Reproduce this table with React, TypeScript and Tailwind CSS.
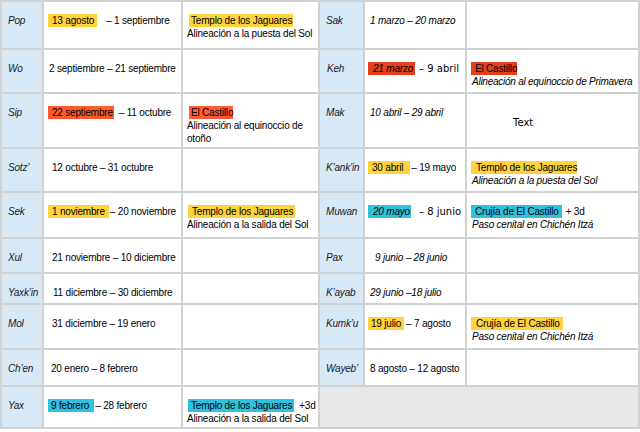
import type { ReactNode } from 'react';

const Mark = ({ className = '', children }: { className?: string; children: ReactNode }) => (
  <span className={`inline-block h-[13px] leading-[13px] align-top ${className}`}>{children}</span>
);

const Name = ({ children, className = '' }: { children: ReactNode; className?: string }) => (
  <div className={`bg-[#d8e8f5] pt-[12px] italic text-[#141a2e] ${className || 'pl-[6px]'}`}>{children}</div>
);

const Cell = ({ children, className = '' }: { children?: ReactNode; className?: string }) => (
  <div className={`bg-white pt-[12px] ${className}`}>{children}</div>
);

const yellow = 'bg-[#fed33c]';
const cyan = 'bg-[#30c1de]';

export default function App() {
  return (
    <div className="w-[640px] h-[432px] bg-white font-['Liberation_Sans',Arial,sans-serif] text-[10px] leading-[13px] tracking-[-0.2px] text-black">
      <div className="grid grid-cols-[40px_137px_135px_43px_100px_171px] grid-rows-[46px_42px_53px_42px_44px_33px_29px_43px_35px_40px] gap-[2px] p-[2px] bg-[#d2d2d2]">
        {/* Pop / Sak */}
        <Name>Pop</Name>
        <Cell className="pl-[4px] whitespace-nowrap">
          <Mark className={`${yellow} pl-[4px] pr-[3px]`}>13 agosto</Mark>
          <span className="ml-[9px]">– 1 septiembre</span>
        </Cell>
        <Cell className="pl-[4px] whitespace-nowrap">
          <div><Mark className={`${yellow} ml-[2px] pl-[2px] pr-[1px]`}>Templo de los Jaguares</Mark></div>
          <div>Alineación a la puesta del Sol</div>
        </Cell>
        <Name>Sak</Name>
        <Cell className="pl-[5px] italic whitespace-nowrap">1 marzo – 20 marzo</Cell>
        <Cell />

        {/* Wo / Keh */}
        <Name>Wo</Name>
        <Cell className="pl-[5px] whitespace-nowrap">2 septiembre – 21 septiembre</Cell>
        <Cell />
        <Name className="pl-[7px]">Keh</Name>
        <Cell className="pl-[3px] whitespace-nowrap">
          <Mark className="bg-[#e4401c] pl-[5px] pr-[2px] italic">21 marzo</Mark>
          <span className="ml-[4px] font-['DejaVu_Sans',sans-serif] tracking-normal">– 9 abril</span>
        </Cell>
        <Cell className="pl-[4px] whitespace-nowrap">
          <div><Mark className="bg-[#e4401c] pl-[4px]">El Castillo</Mark></div>
          <div className="ml-[1px] italic tracking-[-0.25px]">Alineación al equinoccio de Primavera</div>
        </Cell>

        {/* Sip / Mak */}
        <Name>Sip</Name>
        <Cell className="pl-[4px] whitespace-nowrap">
          <Mark className="bg-[#ff5b2f] pl-[4px] pr-[1px]">22 septiembre</Mark>
          <span className="ml-[5px]">– 11 octubre</span>
        </Cell>
        <Cell className="pl-[4px] pr-[6px]">
          <div><Mark className="bg-[#ff5c38] ml-[2px] pl-[2px]">El Castillo</Mark></div>
          <div>Alineación al equinoccio de otoño</div>
        </Cell>
        <Name>Mak</Name>
        <Cell className="pl-[5px] italic whitespace-nowrap">10 abril – 29 abril</Cell>
        <Cell className="pt-[22px] pl-[46px] font-['DejaVu_Sans',sans-serif] tracking-normal">Text</Cell>

        {/* Sotz' / K'ank'in */}
        <Name>Sotz’</Name>
        <Cell className="pl-[8px] whitespace-nowrap">12 octubre – 31 octubre</Cell>
        <Cell />
        <Name>K’ank’in</Name>
        <Cell className="pl-[3px] whitespace-nowrap">
          <Mark className={`${yellow} pl-[4px] pr-[7px]`}>30 abril</Mark>
          <span className="ml-[1px]">– 19 mayo</span>
        </Cell>
        <Cell className="pl-[4px] whitespace-nowrap">
          <div><Mark className={`${yellow} pl-[5px]`}>Templo de los Jaguares</Mark></div>
          <div className="ml-[1px] italic">Alineación a la puesta del Sol</div>
        </Cell>

        {/* Sek / Muwan */}
        <Name>Sek</Name>
        <Cell className="pl-[4px] whitespace-nowrap">
          <Mark className={`${yellow} pl-[4px] pr-[4px]`}>1 noviembre</Mark>
          <span className="ml-[1px]">– 20 noviembre</span>
        </Cell>
        <Cell className="pl-[4px] whitespace-nowrap">
          <div><Mark className={`${yellow} ml-[1px] pl-[4px] pr-[2px]`}>Templo de los Jaguares</Mark></div>
          <div>Alineación a la salida del Sol</div>
        </Cell>
        <Name>Muwan</Name>
        <Cell className="pl-[3px] whitespace-nowrap">
          <Mark className={`${cyan} pl-[5px] pr-[1px] italic`}>20 mayo</Mark>
          <span className="ml-[8px] font-['DejaVu_Sans',sans-serif] tracking-normal">– 8 junio</span>
        </Cell>
        <Cell className="pl-[4px] whitespace-nowrap">
          <div>
            <Mark className={`${cyan} pl-[4px] pr-[3px]`}>Crujía de El Castillo</Mark>
            <span className="ml-[4px]">+ 3d</span>
          </div>
          <div className="ml-[1px] italic">Paso cenital en Chichén Itzá</div>
        </Cell>

        {/* Xul / Pax */}
        <Name>Xul</Name>
        <Cell className="pl-[8px] pt-[11px] whitespace-nowrap">21 noviembre – 10 diciembre</Cell>
        <Cell />
        <Name>Pax</Name>
        <Cell className="pl-[10px] italic whitespace-nowrap">9 junio – 28 junio</Cell>
        <Cell />

        {/* Yaxk'in / K'ayab */}
        <Name>Yaxk’in</Name>
        <Cell className="pl-[9px] whitespace-nowrap">11 diciembre – 30 diciembre</Cell>
        <Cell />
        <Name>K’ayab</Name>
        <Cell className="pl-[5px] italic whitespace-nowrap">29 junio –18 julio</Cell>
        <Cell />

        {/* Mol / Kumk'u */}
        <Name>Mol</Name>
        <Cell className="pl-[8px] whitespace-nowrap">31 diciembre – 19 enero</Cell>
        <Cell />
        <Name>Kumk’u</Name>
        <Cell className="pl-[3px] whitespace-nowrap">
          <Mark className={`${yellow} pl-[3px] pr-[3px]`}>19 julio</Mark>
          <span className="ml-[2px]">– 7 agosto</span>
        </Cell>
        <Cell className="pl-[4px] whitespace-nowrap">
          <div><Mark className={`${yellow} pl-[5px] pr-[3px]`}>Crujía de El Castillo</Mark></div>
          <div className="ml-[1px] italic">Paso cenital en Chichén Itzá</div>
        </Cell>

        {/* Ch'en / Wayeb' */}
        <Name>Ch’en</Name>
        <Cell className="pl-[7px] whitespace-nowrap">20 enero – 8 febrero</Cell>
        <Cell />
        <Name>Wayeb’</Name>
        <Cell className="pl-[5px] whitespace-nowrap">8 agosto – 12 agosto</Cell>
        <Cell />

        {/* Yax */}
        <Name>Yax</Name>
        <Cell className="pl-[4px] whitespace-nowrap">
          <Mark className={`${cyan} pl-[3px] pr-[5px]`}>9 febrero</Mark>
          <span className="ml-[1px]">– 28 febrero</span>
        </Cell>
        <Cell className="pl-[4px] whitespace-nowrap">
          <div>
            <Mark className={`${cyan} ml-[1px] pl-[3px] pr-[2px]`}>Templo de los Jaguares</Mark>
            <span className="ml-[5px]">+3d</span>
          </div>
          <div>Alineación a la salida del Sol</div>
        </Cell>
        <div className="col-span-3 bg-[#e8e8e8]" />
      </div>
    </div>
  );
}
